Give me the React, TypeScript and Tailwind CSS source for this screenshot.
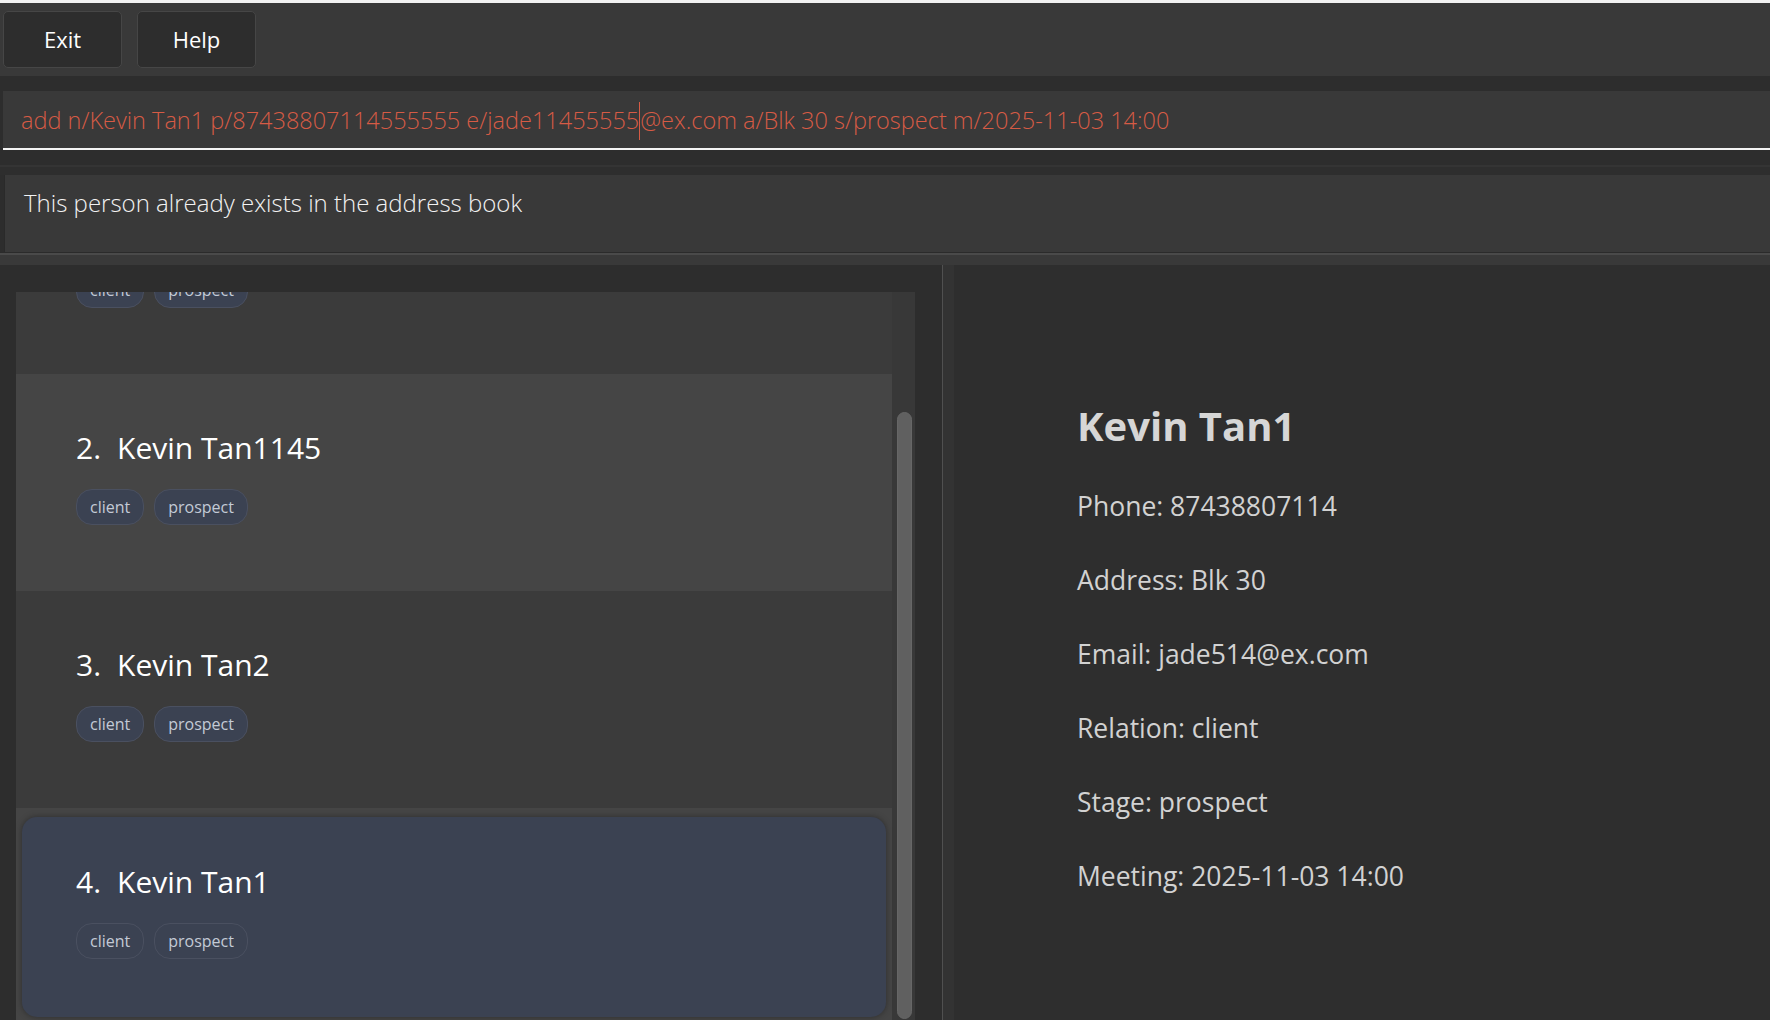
import React from "react";

const font = "font-['Open_Sans',sans-serif]";

function Tag({ label }: { label: string }) {
  return (
    <div className="h-[36px] px-[13px] rounded-[16px] border border-[#4a5060] bg-[#3b4252] text-[#c3cad6] text-[16px] leading-[34px] flex items-center">
      {label}
    </div>
  );
}

function CardContent({ idx, name }: { idx: number; name: string }) {
  return (
    <>
      <div className="flex items-baseline gap-[16px] h-[41px] text-[30px] leading-[41px] text-white">
        <span>{idx}.</span>
        <span>{name}</span>
      </div>
      <div className="flex gap-[10px] mt-[21px]">
        <Tag label="client" />
        <Tag label="prospect" />
      </div>
    </>
  );
}

function Card({ idx, name, bg, extra = "" }: { idx: number; name: string; bg: string; extra?: string }) {
  return (
    <div className={`h-[217px] shrink-0 pt-[53px] pl-[60px] ${bg} ${extra}`}>
      <CardContent idx={idx} name={name} />
    </div>
  );
}

export default function App() {
  return (
    <div className={`w-full h-[1020px] overflow-hidden bg-[#2d2d2d] flex flex-col ${font}`}>
      {/* top strip */}
      <div className="h-[3px] bg-[#f2f2f2] shrink-0" />
      {/* menu bar */}
      <div className="h-[73px] shrink-0 bg-[#393939] flex items-start pt-[8px] pl-[3px] gap-[15px]">
        <button className="w-[119px] h-[57px] rounded-[5px] border border-[#464646] bg-[#2d2d2d] text-white text-[22px]">
          Exit
        </button>
        <button className="w-[119px] h-[57px] rounded-[5px] border border-[#464646] bg-[#2d2d2d] text-white text-[22px]">
          Help
        </button>
      </div>
      {/* command box */}
      <div className="h-[15px] shrink-0" />
      <div className="h-[59px] shrink-0 ml-[3px] bg-[#393939] border-b-2 border-[#f4f4f4] flex items-center pl-[18px] pt-[3px] text-[#d65b45] text-[23.5px] font-light whitespace-nowrap">
        <span>add n/Kevin Tan1 p/87438807114555555 e/jade11455555</span>
        <span className="inline-block w-px h-[38px] bg-[#d65b45]" />
        <span>@ex.com a/Blk 30 s/prospect m/2025-11-03 14:00</span>
      </div>
      <div className="h-[15px] shrink-0" />
      {/* result area */}
      <div className="h-[100px] shrink-0 flex flex-col">
        <div className="h-[2px] bg-[#343434]" />
        <div className="h-[8px] bg-[#2e2e2e]" />
        <div className="h-[77px] ml-[4px] bg-[#393939] border-l border-[#2a2a2a] pl-[19px] pt-[10px] text-[#f2f2f2] text-[24px] font-light">
          This person already exists in the address book
        </div>
        <div className="h-[1px] bg-[#2b2b2b]" />
        <div className="h-[2px] bg-[#4a4a4a]" />
        <div className="h-[10px] bg-[#393939]" />
      </div>
      {/* main split */}
      <div className="flex-1 flex min-h-0">
        {/* list panel */}
        <div className="w-[942px] shrink-0 pl-[16px] pt-[27px] pr-[27px] flex">
          <div className="flex-1 bg-[#383838] flex overflow-hidden">
            <div className="w-[876px] flex flex-col">
              <Card idx={1} name="Kevin Tan" bg="bg-[#3b3b3b]" extra="-mt-[135px]" />
              <Card idx={2} name="Kevin Tan1145" bg="bg-[#454545]" />
              <Card idx={3} name="Kevin Tan2" bg="bg-[#3b3b3b]" />
              <div className="h-[217px] shrink-0 bg-[#454545] pt-[9px] px-[6px]">
                <div className="h-[200px] rounded-[15px] bg-[#3b4252] shadow-[0_0_6px_rgba(0,0,0,0.35)] pt-[44px] pl-[54px]">
                  <CardContent idx={4} name="Kevin Tan1" />
                </div>
              </div>
            </div>
            <div className="w-[23px] pl-[5px] pr-[3px] pt-[120px] flex flex-col">
              <div className="flex-1 mb-[1px] rounded-[8px] bg-[#606060] border border-[#666666]" />
            </div>
          </div>
        </div>
        {/* divider */}
        <div className="w-[12px] shrink-0 flex">
          <div className="w-px bg-[#505050]" />
          <div className="flex-1 bg-[#333333]" />
        </div>
        {/* details panel */}
        <div className="flex-1 bg-[#2e2e2e] pl-[123px] pt-[134px] text-[#d2d2d2]">
          <div className="text-[40px] leading-[54px] font-bold text-[#d6d6d6]">Kevin Tan1</div>
          <div className="mt-[16px] text-[26.5px] leading-[74px]">
            <div>Phone: 87438807114</div>
            <div>Address: Blk 30</div>
            <div>Email: jade514@ex.com</div>
            <div>Relation: client</div>
            <div>Stage: prospect</div>
            <div>Meeting: 2025-11-03 14:00</div>
          </div>
        </div>
      </div>
    </div>
  );
}
